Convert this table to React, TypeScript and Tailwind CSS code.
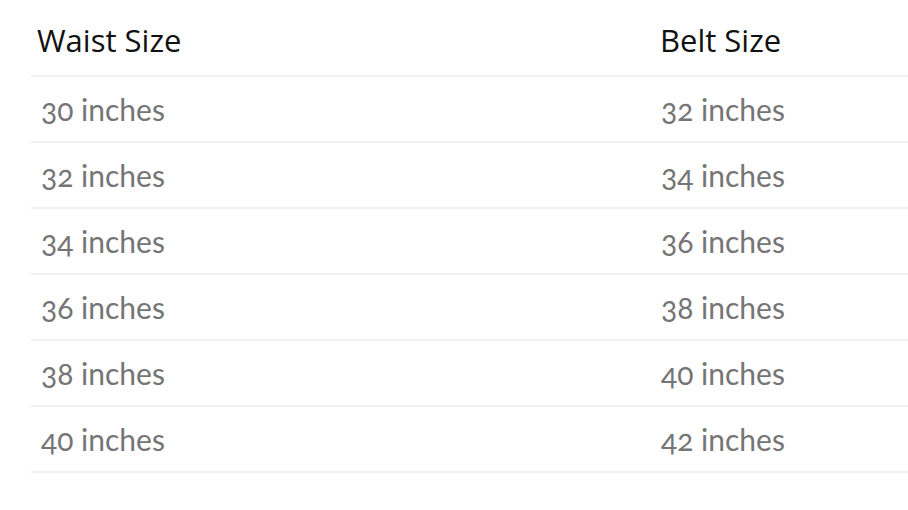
import React from "react";

const rows = [
  ["30 inches", "32 inches"],
  ["32 inches", "34 inches"],
  ["34 inches", "36 inches"],
  ["36 inches", "38 inches"],
  ["38 inches", "40 inches"],
  ["40 inches", "42 inches"],
];

export default function App() {
  return (
    <div className="w-[908px] h-[510px] bg-white overflow-hidden">
      <div className="pt-[10px] pl-[31px]">
        <table className="w-[1250px] border-collapse">
          <thead>
            <tr className="h-[66px] border-b-2 border-[#f1f1f1]">
              <th className="w-[623px] text-left align-middle pl-[6px] pb-[4px] font-normal text-[31px] text-[#111] [font-family:'Open_Sans',sans-serif]">
                Waist Size
              </th>
              <th className="text-left align-middle pl-[6px] pb-[4px] font-normal text-[31px] text-[#111] [font-family:'Open_Sans',sans-serif]">
                Belt Size
              </th>
            </tr>
          </thead>
          <tbody>
            {rows.map(([a, b]) => (
              <tr key={a} className="h-[66px] border-b-2 border-[#f1f1f1]">
                <td className="align-middle pl-[10px] text-[30px] text-[#757575] oldstyle-nums [font-family:Lato,sans-serif]">
                  {a}
                </td>
                <td className="align-middle pl-[7px] text-[30px] text-[#757575] oldstyle-nums [font-family:Lato,sans-serif]">
                  {b}
                </td>
              </tr>
            ))}
          </tbody>
        </table>
      </div>
    </div>
  );
}
